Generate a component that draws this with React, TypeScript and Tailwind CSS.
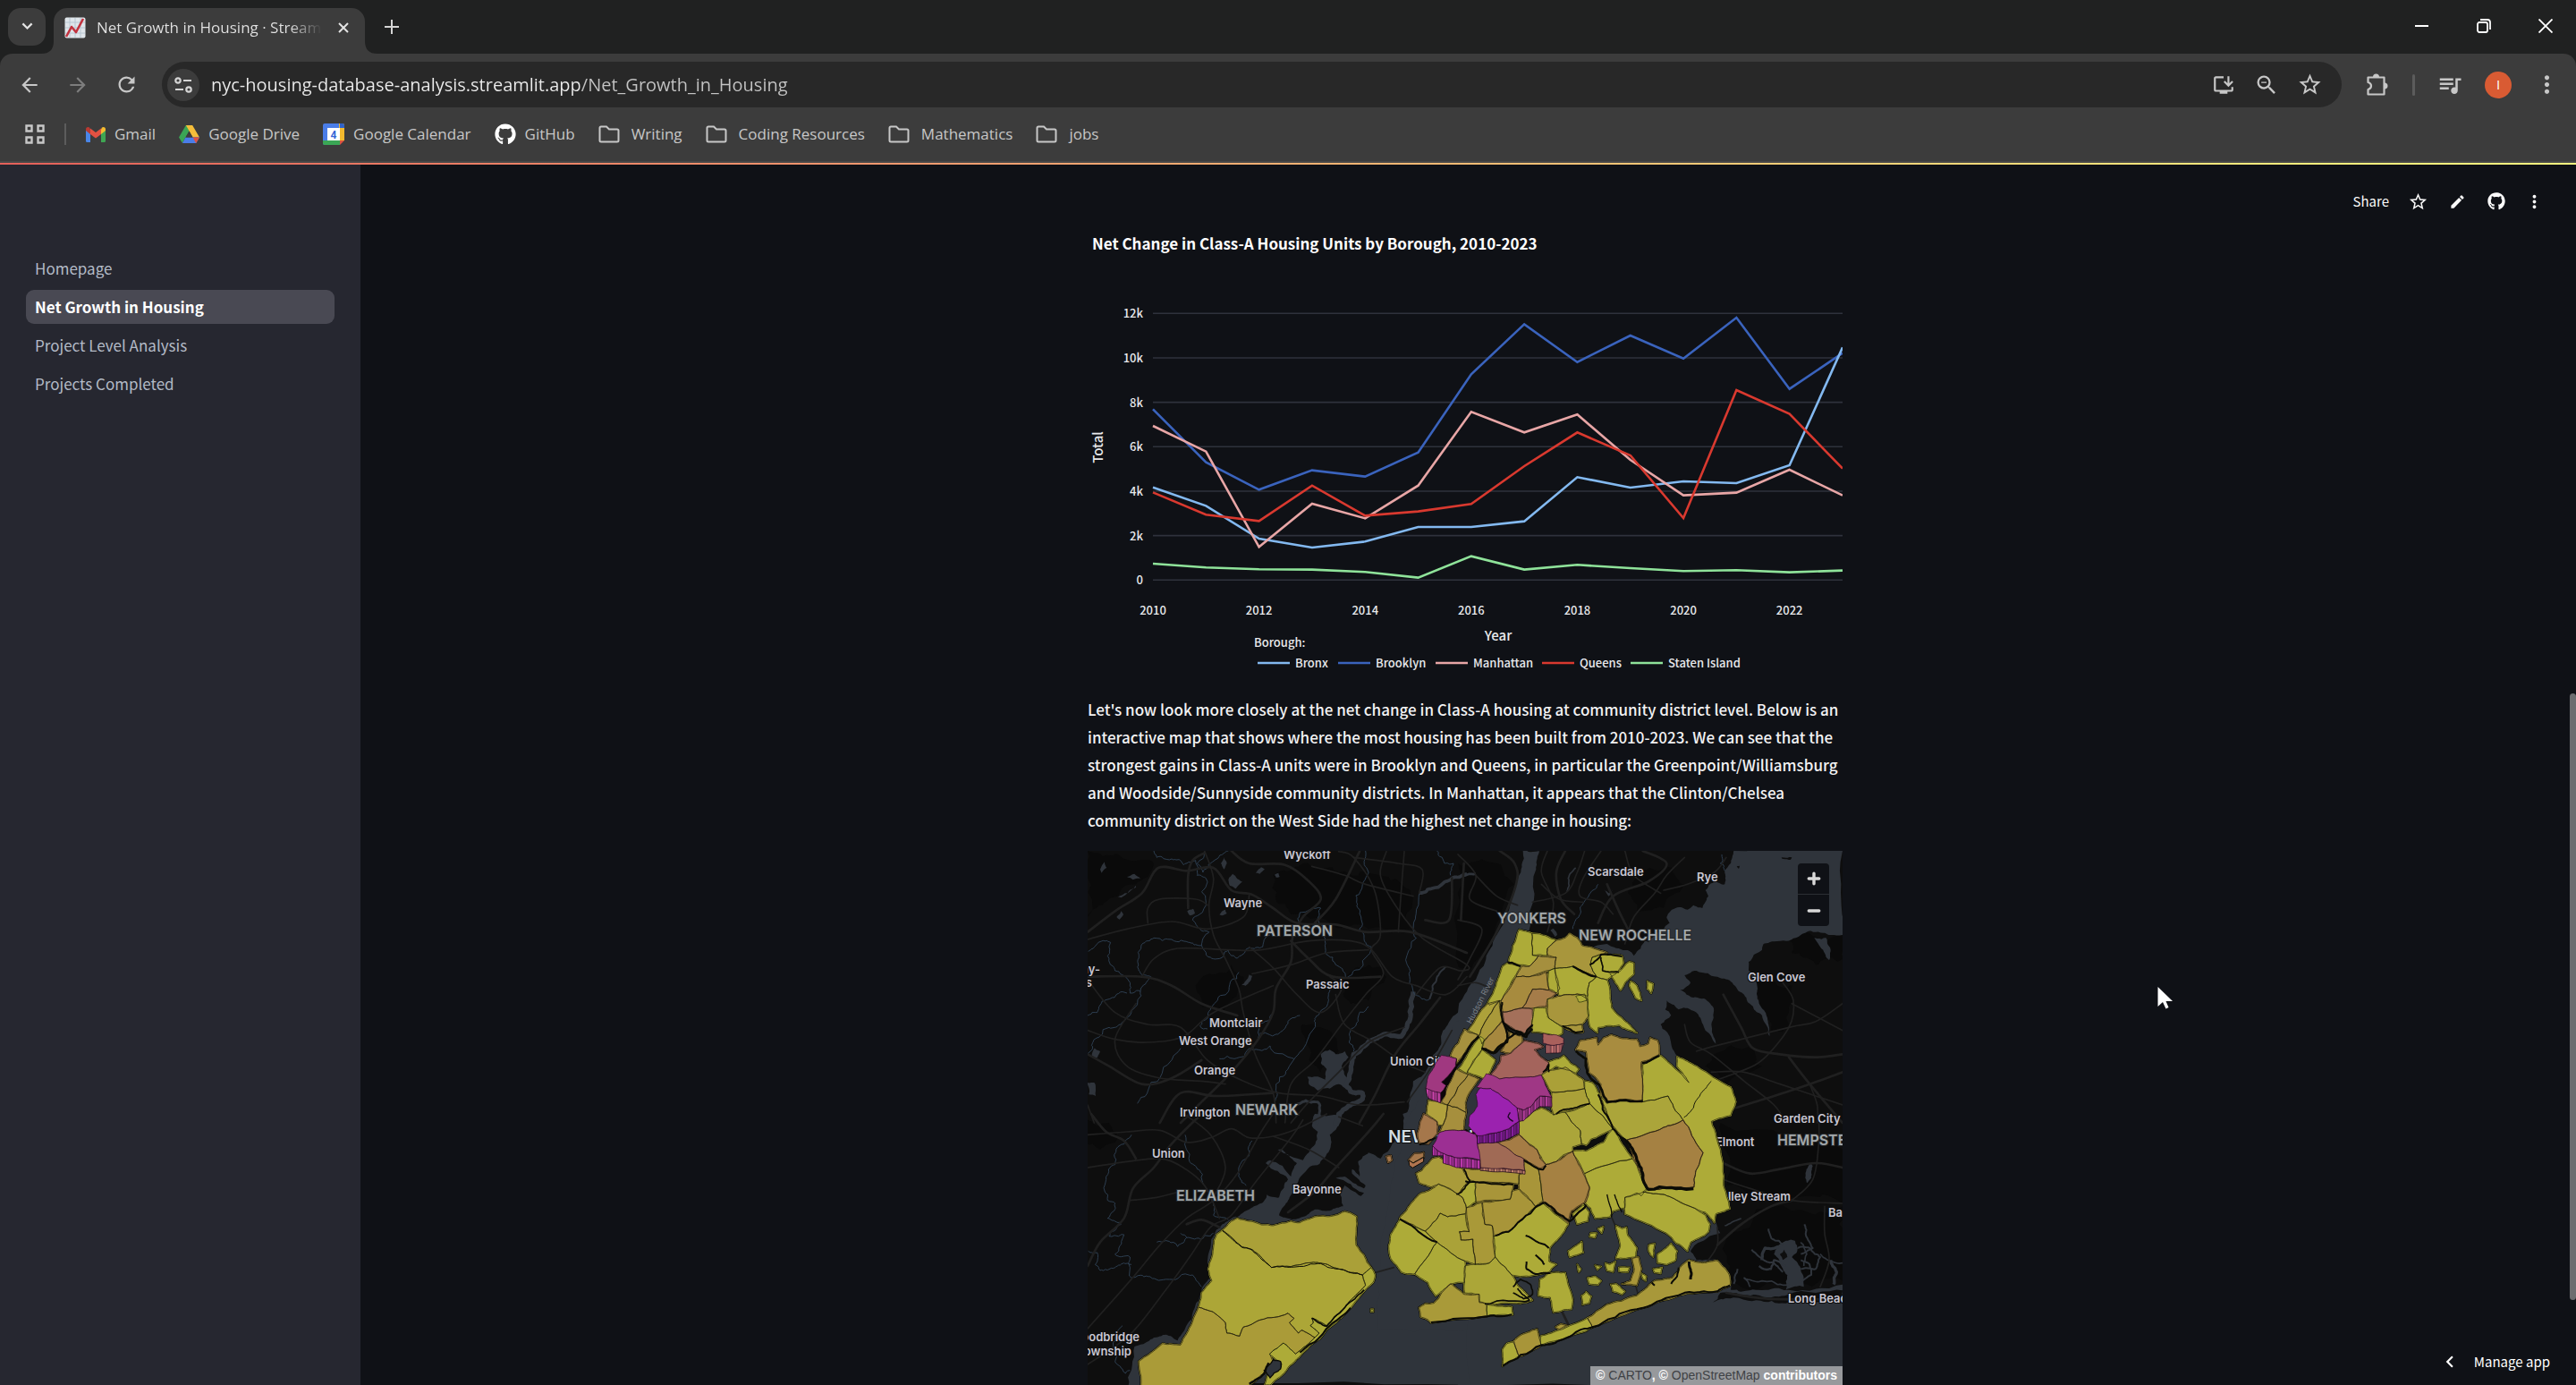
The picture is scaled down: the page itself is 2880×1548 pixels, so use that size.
import type { ReactNode } from 'react'
import {
  MdArrowBack,
  MdArrowForward,
  MdChevronLeft,
  MdEdit,
  MdMoreVert,
  MdOutlineInstallDesktop,
  MdQueueMusic,
  MdRefresh,
  MdStarBorder,
  MdZoomOut,
} from 'react-icons/md'
import { FaGithub } from 'react-icons/fa'

/* ---------- Browser chrome ---------- */

function ChartFavicon() {
  return (
    <svg viewBox="0 0 24 24" className="size-6 shrink-0" aria-hidden="true">
      <rect x="0.5" y="0.5" width="23" height="23" rx="2" fill="#dfe5ea" />
      <path d="M6 1v22M12 1v22M18 1v22M1 6h22M1 12h22M1 18h22" stroke="#b7c6d2" strokeWidth="1" />
      <path d="M2 22 8 11l5 6L21 2" fill="none" stroke="#c2333f" strokeWidth="2.6" strokeLinejoin="round" />
    </svg>
  )
}

function GmailIcon() {
  return (
    <svg viewBox="0 0 22 17" className="w-[22px] shrink-0" aria-hidden="true">
      <path d="M0 3v12.500q0 1.500 1.500 1.500H5V7z" fill="#4a86e8" />
      <path d="M22 3v12.500q0 1.500-1.500 1.500H17V7z" fill="#3fa653" />
      <path d="M17 2.500V8l5-4V2.500Q22 0 19.500 0q-.8 0-1.500.5z" fill="#f4bb30" />
      <path d="M5 2.500V8L0 4V2.500Q0 0 2.500 0 3.300 0 4 .5z" fill="#b93a32" />
      <path d="M5 8V1.500l6 4.500 6-4.500V8l-6 4.600z" fill="#e25142" />
    </svg>
  )
}

function DriveIcon() {
  return (
    <svg viewBox="0 0 24 21" className="w-[23px] shrink-0" aria-hidden="true">
      <path d="M8.200 0h7.600L12 6.700 4 20.500 0 14z" fill="#3aa655" />
      <path d="M8.200 0h7.600L24 14h-7.800z" fill="#f4bd3a" />
      <path d="M7.800 14H24l-4 7H4z" fill="#4a7de8" />
      <path d="M16.200 14H24l-4 7z" fill="#de5142" />
      <path d="M12 6.700 16.200 14H7.800z" fill="#3c3c3c" />
    </svg>
  )
}

function CalendarIcon() {
  return (
    <svg viewBox="0 0 24 24" className="size-6 shrink-0" aria-hidden="true">
      <path d="M2 0h16v5H5v19H2q-2 0-2-2V2q0-2 2-2z" fill="#4a7de8" />
      <path d="M18 0h4q2 0 2 2v17h-5V5h-1z" fill="#f2b92e" />
      <path d="M19 0h3q2 0 2 2v3h-5z" fill="#2f62c9" />
      <path d="M0 19h19v5H2q-2 0-2-2z" fill="#3aa655" />
      <path d="M19 19h5l-5 5z" fill="#de5142" />
      <rect x="5" y="5" width="14" height="14" fill="#fff" />
      <text x="12" y="16.500" textAnchor="middle" fontSize="12" fontWeight="700" fill="#3367d6" fontFamily="Roboto, sans-serif">
        4
      </text>
    </svg>
  )
}

function FolderIcon() {
  return (
    <svg viewBox="0 0 24 20" className="mr-[3px] w-6 shrink-0" fill="none" stroke="currentColor" strokeWidth="2" aria-hidden="true">
      <path d="M1.500 3q0-1.500 1.500-1.500h6l3 3h9q1.500 0 1.500 1.500v11q0 1.500-1.500 1.500H3Q1.500 18.500 1.500 17z" />
    </svg>
  )
}

function PuzzleIcon() {
  return (
    <svg viewBox="0 0 26 26" className="size-[26px]" aria-hidden="true">
      <path
        d="M2.500 4.500h18v19h-18v-5.500q3.500-1 3.500-4t-3.500-4z"
        fill="none"
        stroke="currentColor"
        strokeWidth="2.200"
        strokeLinejoin="round"
      />
      <path d="M8 4a3.500 3.500 0 0 1 7 0zM21 10.500a3.500 3.500 0 0 1 0 7z" fill="currentColor" />
    </svg>
  )
}

function IconButton({ label, children, className = '' }: { label: string; children: ReactNode; className?: string }) {
  return (
    <button type="button" aria-label={label} className={'flex size-12 shrink-0 items-center justify-center ' + className}>
      {children}
    </button>
  )
}

function TabStrip() {
  return (
    <div className="flex h-[60px] bg-[#202121]">
      <button
        type="button"
        aria-label="Search tabs"
        className="mt-[9px] ml-[9px] flex size-[42px] items-center justify-center rounded-[14px] bg-[#3c3c3c]"
      >
        <svg viewBox="0 0 14 10" className="w-[13px]" fill="none" stroke="#e3e3e3" strokeWidth="2.400" aria-hidden="true">
          <path d="m1.500 1.500 5.500 5.500 5.500-5.500" />
        </svg>
      </button>
      <div className="relative mt-[9px] ml-[9px] flex w-[348px] items-center rounded-t-[15px] bg-[#3c3c3c] pb-[7px] pl-3">
        <svg viewBox="0 0 14 14" className="absolute bottom-0 -left-[14px] size-[14px]" fill="#3c3c3c" aria-hidden="true">
          <path d="M14 0v14H0Q14 14 14 0z" />
        </svg>
        <svg viewBox="0 0 14 14" className="absolute -right-[14px] bottom-0 size-[14px]" fill="#3c3c3c" aria-hidden="true">
          <path d="M0 0v14h14Q0 14 0 0z" />
        </svg>
        <ChartFavicon />
        <span className="ml-3 w-[250px] overflow-hidden bg-[linear-gradient(90deg,#e3e3e3_215px,#3c3c3c_252px)] bg-clip-text text-[17px] leading-6 whitespace-nowrap text-transparent">
          Net Growth in Housing · Streamlit
        </span>
        <button type="button" aria-label="Close tab" className="ml-[14px] flex size-6 items-center justify-center">
          <svg viewBox="0 0 12 12" className="size-3" stroke="#e3e3e3" strokeWidth="2" aria-hidden="true">
            <path d="m1 1 10 10M11 1 1 11" />
          </svg>
        </button>
      </div>
      <button type="button" aria-label="New tab" className="ml-[18px] flex h-[60px] w-6 items-center justify-center">
        <svg viewBox="0 0 16 16" className="size-4" stroke="#d5d5d5" strokeWidth="2" aria-hidden="true">
          <path d="M8 0v16M0 8h16" />
        </svg>
      </button>
      <div className="ml-auto flex text-white">
        <button type="button" aria-label="Minimize" className="flex h-[58px] w-[69px] items-center justify-center">
          <span className="h-[2px] w-[15px] bg-white" />
        </button>
        <button type="button" aria-label="Restore" className="flex h-[58px] w-[69px] items-center justify-center">
          <svg viewBox="0 0 16 16" className="size-4" fill="none" stroke="currentColor" strokeWidth="1.800" aria-hidden="true">
            <rect x="1" y="4" width="11" height="11" rx="2" />
            <path d="M4 1h8q3 0 3 3v8" />
          </svg>
        </button>
        <button type="button" aria-label="Close" className="flex h-[58px] w-[69px] items-center justify-center">
          <svg viewBox="0 0 16 16" className="size-4" stroke="currentColor" strokeWidth="1.800" aria-hidden="true">
            <path d="m.5.5 15 15M15.500.5l-15 15" />
          </svg>
        </button>
      </div>
    </div>
  )
}

function AddressBar() {
  return (
    <div className="flex h-[69px] items-center rounded-t-[14px] bg-[#3c3c3c] px-[9px] text-[#c7c7c7]">
      <div className="flex gap-[6px]">
        <IconButton label="Back">
          <MdArrowBack size={26} />
        </IconButton>
        <IconButton label="Forward" className="text-[#7d7d7d]">
          <MdArrowForward size={26} />
        </IconButton>
        <IconButton label="Reload">
          <MdRefresh size={27} />
        </IconButton>
      </div>
      <div className="ml-4 flex h-[51px] flex-1 items-center rounded-full bg-[#282828] pr-3 pl-[6px]">
        <button
          type="button"
          aria-label="Site information"
          className="flex size-9 items-center justify-center rounded-full bg-[#3c3c3c]"
        >
          <svg viewBox="0 0 20 18" className="w-5" fill="none" stroke="#d5d5d5" strokeWidth="2.200" aria-hidden="true">
            <circle cx="4" cy="4" r="2.700" />
            <path d="M10 4h9M1 14h9" />
            <circle cx="16" cy="14" r="2.700" />
          </svg>
        </button>
        <input
          type="text"
          aria-label="Address and search bar"
          defaultValue="nyc-housing-database-analysis.streamlit.app/Net_Growth_in_Housing"
          className="ml-[13px] min-w-0 flex-1 bg-[linear-gradient(90deg,#ececec_412px,#c4c4c4_412px)] bg-clip-text text-[20px] text-transparent outline-none"
        />
        <IconButton label="Install app">
          <MdOutlineInstallDesktop size={26} />
        </IconButton>
        <IconButton label="Zoom">
          <MdZoomOut size={28} />
        </IconButton>
        <IconButton label="Bookmark this page">
          <MdStarBorder size={29} />
        </IconButton>
      </div>
      <div className="ml-4 flex items-center gap-[6px]">
        <IconButton label="Extensions">
          <PuzzleIcon />
        </IconButton>
        <span className="mx-[9px] h-6 w-[3px] rounded bg-[#5c5c5c]" />
        <IconButton label="Media controls">
          <MdQueueMusic size={30} />
        </IconButton>
        <IconButton label="Profile">
          <span className="flex size-[30px] items-center justify-center rounded-full bg-[#d95b33] text-[15px] text-white">I</span>
        </IconButton>
        <IconButton label="Menu">
          <MdMoreVert size={31} />
        </IconButton>
      </div>
    </div>
  )
}

const bookmarks: { name: string; icon: ReactNode }[] = [
  { name: 'Gmail', icon: <GmailIcon /> },
  { name: 'Google Drive', icon: <DriveIcon /> },
  { name: 'Google Calendar', icon: <CalendarIcon /> },
  { name: 'GitHub', icon: <FaGithub size={24} color="#fff" /> },
  { name: 'Writing', icon: <FolderIcon /> },
  { name: 'Coding Resources', icon: <FolderIcon /> },
  { name: 'Mathematics', icon: <FolderIcon /> },
  { name: 'jobs', icon: <FolderIcon /> },
]

function BookmarksBar() {
  return (
    <div className="flex h-[53px] items-center border-b-2 border-[#474747] bg-[#3c3c3c] pb-[9px] pl-7 text-[#c7c7c7]">
      <button type="button" aria-label="All apps">
        <svg viewBox="0 0 22 22" className="size-[22px]" fill="none" stroke="currentColor" strokeWidth="2.400" aria-hidden="true">
          <path d="M1.500 1.500h6v6h-6zM14.500 1.500h6v6h-6zM1.500 14.500h6v6h-6zM14.500 14.500h6v6h-6z" />
        </svg>
      </button>
      <span className="mx-[22px] h-6 w-[2px] bg-[#5c5c5c]" />
      <nav aria-label="Bookmarks" className="flex gap-[26px]">
        {bookmarks.map((b) => (
          <a key={b.name} href="#" className="flex items-center gap-[10px] text-[17px] leading-6 whitespace-nowrap">
            {b.icon}
            {b.name}
          </a>
        ))}
      </nav>
    </div>
  )
}

/* ---------- Line chart ---------- */

const series = [
  { name: 'Bronx', color: '#83b9f0', x: 190, data: [4170, 3340, 1865, 1463, 1731, 2389, 2389, 2644, 4630, 4160, 4442, 4362, 5167, 10468] },
  { name: 'Brooklyn', color: '#3a63bd', x: 280, data: [7690, 5301, 4066, 4939, 4657, 5744, 9260, 11514, 9810, 11004, 9971, 11810, 8602, 10213] },
  { name: 'Manhattan', color: '#e8a6a6', x: 389, data: [6938, 5784, 1490, 3436, 2778, 4254, 7569, 6643, 7448, 5408, 3811, 3932, 4966, 3811] },
  { name: 'Queens', color: '#d9392f', x: 508, data: [3945, 2939, 2657, 4254, 2899, 3087, 3422, 5126, 6643, 5610, 2791, 8549, 7475, 5019] },
  { name: 'Staten Island', color: '#8fe39a', x: 607, data: [738, 564, 483, 470, 362, 107, 1074, 470, 684, 537, 403, 443, 349, 429] },
]
const drawOrder = [1, 0, 2, 3, 4]
const px = (i: number) => 73 + (i * 771) / 13
const py = (v: number) => 364.3 - (v * 298) / 12000

function LineChart() {
  return (
    <svg
      viewBox="0 0 844 493"
      className="block w-full"
      role="img"
      aria-label="Net change in housing units by borough"
      fill="#e8e9ec"
      fontSize="13"
      fontWeight="500"
    >
      {[0, 2, 4, 6, 8, 10, 12].map((k) => (
        <g key={k}>
          <path d={`M73 ${py(k * 1000)}H844`} stroke="#2f323c" strokeWidth="1.600" />
          <text x="62" y={py(k * 1000) + 5} textAnchor="end">
            {k === 0 ? '0' : k + 'k'}
          </text>
        </g>
      ))}
      {[2010, 2012, 2014, 2016, 2018, 2020, 2022].map((year) => (
        <text key={year} x={px(year - 2010)} y="403" textAnchor="middle">
          {year}
        </text>
      ))}
      {drawOrder.map((n) => (
        <polyline
          key={n}
          fill="none"
          stroke={series[n].color}
          strokeWidth="2.600"
          points={series[n].data.map((v, i) => `${px(i)},${py(v)}`).join(' ')}
        />
      ))}
      <text x="459" y="432" textAnchor="middle" fontSize="15">
        Year
      </text>
      <text transform="translate(17 216) rotate(-90)" textAnchor="middle" fontSize="15">
        Total
      </text>
      <text x="186" y="439">
        Borough:
      </text>
      {series.map((s) => (
        <g key={s.name}>
          <path d={`M${s.x} 457h36`} stroke={s.color} strokeWidth="2.600" />
          <text x={s.x + 42} y="462">
            {s.name}
          </text>
        </g>
      ))}
    </svg>
  )
}

/* ---------- District map ---------- */

type Pt = [number, number]
const parse = (s: string): Pt[] => s.split(' ').map((p) => p.split(',').map(Number) as Pt)

const noise = (x: number, y: number) => {
  const n = Math.sin(x * 12.9898 + y * 78.233) * 43758.5453
  return n - Math.floor(n) - 0.5
}

// Subdivides every edge and shifts the midpoints, so that shared borders stay identical.
function rough(s: string, amp: number, closed: boolean): string {
  let pts = parse(s)
  if (closed) pts = [...pts, pts[0]]
  for (let pass = 0; pass < 3; pass++) {
    const out: Pt[] = [pts[0]]
    for (let i = 1; i < pts.length; i++) {
      const [ax, ay] = pts[i - 1]
      const [bx, by] = pts[i]
      const len = Math.hypot(bx - ax, by - ay)
      if (len > 9) {
        const mx = (ax + bx) / 2
        const my = (ay + by) / 2
        const k = Math.min(len * 0.3, 22) * amp
        out.push([mx + noise(mx, my) * k, my + noise(my, mx) * k])
      }
      out.push([bx, by])
    }
    pts = out
  }
  return 'M' + pts.map((p) => p[0].toFixed(1) + ' ' + p[1].toFixed(1)).join('L') + (closed ? 'Z' : '')
}

// Catmull-Rom spline through the given points.
function curve(s: string): string {
  const p = parse(s)
  let d = `M${p[0]}`
  for (let i = 0; i < p.length - 1; i++) {
    const a = p[i - 1] ?? p[i]
    const b = p[i]
    const c = p[i + 1]
    const e = p[i + 2] ?? c
    d += `C${b[0] + (c[0] - a[0]) / 6} ${b[1] + (c[1] - a[1]) / 6} ${c[0] - (e[0] - b[0]) / 6} ${c[1] - (e[1] - b[1]) / 6} ${c[0]} ${c[1]}`
  }
  return d
}

const WATER = '#2f343b'
const Y = '#adab38'
const O = '#aaa038'
const G = '#a89539'
const T = '#a6883f'
const B = '#a58142'

// The drawing is split in tiles; a tile unit is a third of a map pixel.
const tile = {
  nw: 'translate(-6 -6) scale(.33333)',
  ne: 'translate(414 -6) scale(.33333)',
  sw: 'translate(-6 294) scale(.33333)',
  se: 'translate(414 294) scale(.33333)',
  mid: 'translate(324 169) scale(.33333)',
}
type Tile = keyof typeof tile

const dark: [Tile, string][] = [
  ['nw', '640,100 740,60 860,90 1000,100 1100,150 1100,280 960,280 830,260 700,230 650,180'],
  ['nw', '880,450 960,400 1020,440 960,520 900,530'],
  ['nw', '18,18 120,30 240,60 180,130 90,180 18,240'],
  ['nw', '380,470 500,400 540,440 480,560 400,540'],
  ['nw', '740,600 830,620 860,690 800,760 760,720'],
  ['ne', '0,60 130,60 190,130 120,320 40,420 0,400'],
  ['ne', '590,90 700,70 760,130 690,210 600,220 570,160'],
  ['ne', '1000,440 1120,470 1110,600 1050,620 1010,560'],
  ['ne', '1120,300 1290,300 1290,380 1200,400 1120,360'],
  ['ne', '860,700 980,680 1020,740 900,800 830,740'],
  ['se', '880,30 1290,120 1290,300 1120,280 900,240'],
  ['se', '1000,320 1290,310 1290,560 1100,580 920,560 900,420'],
  ['sw', '18,18 90,30 120,80 60,120 18,100'],
]

const water: [Tile, string][] = [
  ['ne', '218,18 205,100 175,200 130,300 95,370 60,450 0,560 -50,620 -50,760 40,640 105,535 170,390 235,300 262,80 272,18'],
  ['nw', '1290,550 1230,640 1190,690 1150,760 1110,790 1100,850 1080,930 1300,930 1320,600'],
  [
    'ne',
    '925,18 915,60 895,85 895,130 860,120 830,150 840,170 820,210 790,200 770,215 730,210 700,240 710,260 690,280 660,300 620,330 590,370 500,330 300,400 200,600 0,700 0,930 600,930 790,760 730,700 710,640 680,600 715,570 695,550 700,520 740,550 770,545 800,560 830,620 865,665 850,600 855,540 830,515 790,510 745,485 780,460 760,435 800,420 870,440 920,460 960,500 990,540 1020,570 1045,640 1040,590 1010,530 1005,480 1000,430 975,420 975,390 1020,350 1025,330 1080,320 1150,300 1200,290 1250,300 1290,300 1290,18',
  ],
  [
    'se',
    '0,300 310,400 440,300 860,300 880,400 860,405 780,460 800,490 870,490 910,540 915,590 1000,590 1110,590 1290,572 1290,909 0,909',
  ],
  [
    'sw',
    '155,909 175,780 240,750 280,740 320,760 345,720 380,640 400,590 430,550 420,500 440,410 470,370 520,345 560,320 600,300 620,270 660,280 690,220 615,165 630,155 700,210 720,165 655,120 670,118 740,155 760,130 790,60 770,40 780,0 870,0 860,40 830,70 830,120 810,150 760,180 720,240 690,290 660,340 690,350 740,345 780,320 830,325 875,310 865,270 880,240 935,275 945,265 850,215 880,210 945,250 950,240 905,200 905,185 930,210 925,160 960,130 1000,150 1040,100 1080,60 1075,0 1300,0 1300,909',
  ],
  ['mid', '0,940 60,560 90,420 160,280 300,240 420,60 560,60 700,140 900,200 500,400 300,700 300,1100 0,1100'],
  ['nw', '800,700 830,685 850,700 880,690 893,710 870,740 890,780 890,820 860,800 830,815 790,822 760,800 755,775 790,775 815,785 820,750 800,730'],
  ['nw', '490,115 505,95 520,112 537,122 515,145 495,135'],
  ['nw', '60,80 75,55 82,75 65,92'],
  ['nw', '150,105 175,95 195,110 170,115'],
  ['nw', '465,60 475,38 485,60 475,80'],
  ['nw', '582,92 600,73 612,80 595,95'],
  ['nw', '645,98 658,92 662,105 650,107'],
  ['nw', '535,468 560,433 570,437 548,470'],
  ['nw', '32,700 40,680 60,690 50,712 35,712'],
  ['nw', '18,795 40,795 45,840 22,835'],
  ['nw', '115,240 130,220 138,232 125,248'],
  ['nw', '352,220 372,212 378,228 362,235'],
  ['nw', '120,172 180,135 180,140 130,175'],
  ['nw', '460,232 480,215 485,228 468,235'],
  ['ne', '310,285 320,278 333,300 325,306'],
  ['ne', '488,148 505,160 518,148 505,170'],
  ['ne', '1195,310 1235,310 1250,350 1245,385 1225,350'],
  ['se', '1165,215 1182,165 1190,175 1185,215 1170,232'],
  ['se', '1075,440 1100,425 1130,425 1140,450 1120,480 1150,520 1160,580 1100,590 1105,540 1080,500 1060,470'],
]

const landOver: [Tile, string][] = [
  ['se', '855,632 880,600 920,600 1000,607 1110,605 1290,592 1290,635 1100,635 1000,625 900,618'],
  ['se', '1080,470 1095,455 1105,480 1090,490'],
  ['ne', '620,310 650,300 640,325'],
  ['ne', '1085,40 1120,40 1115,48 1088,45'],
  ['ne', '935,70 945,68 942,78'],
]

const wideRivers: [Tile, string, number][] = [
  ['nw', '1110,490 1105,540 1090,600 1070,640 1000,640 950,670 910,700 900,760 885,800 900,825 940,830 940,850 900,870 860,900 850,940', 16],
  ['nw', '720,868 750,855 790,860 797,890 785,935', 9],
  ['nw', '1130,160 1170,145 1240,110 1290,95', 11],
  ['nw', '1165,515 1175,470 1195,435 1220,407', 6],
  ['ne', '0,105 30,98 60,95', 8],
  ['ne', '365,155 370,110 395,75', 5],
  ['se', '985,455 1020,485 1060,500 1090,530', 6],
  ['se', '1042,385 1055,420 1090,440', 6],
  ['se', '1162,370 1168,410 1190,450 1150,470', 6],
  ['se', '1020,490 1030,450 1075,445', 10],
  ['se', '1010,510 1050,520 1060,490 1100,510', 7],
  ['se', '1140,450 1180,450 1215,480 1200,520 1150,520', 6],
  ['se', '1150,490 1175,500 1185,540 1150,560', 6],
  ['se', '1150,430 1170,470 1160,510', 5],
  ['se', '895,375 950,350', 5],
  ['se', '980,580 960,550 1020,560 1110,570', 5],
  ['se', '1215,470 1240,490 1290,500', 5],
  ['se', '1250,490 1270,530 1260,572', 10],
  ['se', '925,570 930,540 938,520', 6],
]

const rivers: [Tile, string][] = [
  ['nw', '240,18 250,40 300,45 340,65 380,50 385,100 415,110 415,190 370,250 395,280 425,290 400,335 360,325 300,315 240,310 215,320 190,370 190,420 230,440 195,490 160,495 145,440 110,420 85,370 95,325 50,330 20,355'],
  ['nw', '410,18 385,60 405,90 430,60 470,30 490,18'],
  ['nw', '400,335 430,375 470,375 490,350 520,378 570,345 605,340 630,300'],
  ['nw', '195,490 160,570 130,600 90,610 40,650 18,700'],
  ['nw', '18,570 50,560 100,510 150,495'],
  ['nw', '525,425 490,490 430,550 395,605 420,615'],
  ['nw', '330,680 260,780 185,865'],
  ['nw', '460,715 510,715 560,680 630,672 710,715'],
  ['nw', '950,18 960,90 940,130 920,190 935,240 945,300 970,340 935,410 885,445'],
  ['nw', '810,300 815,360 850,400 885,445'],
  ['nw', '830,480 820,540 780,580 760,640 715,710 650,800 645,860'],
  ['nw', '590,645 595,600 635,565'],
  ['nw', '595,630 660,630 690,590 730,570'],
  ['nw', '960,540 920,595 900,620 895,660 910,690'],
  ['nw', '725,260 730,225 800,210 790,250 810,300'],
  ['nw', '1190,18 1215,60 1245,60 1235,100'],
  ['nw', '1130,160 1110,280 1120,310 1090,400 1110,490 1140,515 1165,515'],
  ['sw', '165,70 120,110 110,170 80,220 85,290 110,300 85,350 130,370 90,410 140,405 110,470 160,480 165,550 220,545 300,555 370,540 400,580'],
  ['sw', '345,70 360,160 395,190 410,240 440,300 440,340 490,355'],
  ['sw', '570,90 560,130 525,180 530,220 550,240'],
  ['sw', '250,430 320,445 350,415 330,400'],
  ['sw', '350,415 400,420 440,400'],
  ['sw', '135,710 110,830 145,870 160,860'],
  ['sw', '20,460 50,465 60,525 110,515 140,500 165,505'],
  ['ne', '470,130 430,180 410,230 385,280'],
  ['ne', '885,30 880,60 895,85'],
]

const roads: [Tile, string][] = [
  ['nw', '18,290 110,220 200,160 255,75 350,85 440,75 500,150 570,165 640,210 720,260 850,265 950,290 1100,290 1290,360'],
  ['nw', '18,315 150,280 300,255 420,280 540,240 560,165'],
  ['nw', '410,18 440,110 425,200 440,300 480,380 525,480 540,560 580,700 640,830 650,930'],
  ['nw', '18,440 200,440 300,470 400,530 520,570'],
  ['nw', '18,450 110,560 220,600 330,610 420,720 540,790 660,830 800,840 930,870 1080,860'],
  ['nw', '220,260 220,210 260,180 380,180 420,200'],
  ['nw', '355,210 355,100 370,50 410,25'],
  ['nw', '200,440 240,380 320,345 490,350 600,350 760,320 900,320 970,350 1040,440 1120,470 1220,500 1290,440'],
  ['nw', '860,20 910,40 980,150 1000,300 970,350 1010,430 950,500 870,600 780,720 700,800 680,930'],
  ['nw', '500,18 560,60 680,65 760,120 800,180 740,240 705,310 700,390 650,480 640,560 590,650 500,760 400,860 330,930'],
  ['nw', '1020,20 1000,100 1050,200 1140,310 1290,400 1270,420 1200,410 1120,500'],
  ['nw', '1080,610 960,660 860,760 760,860 700,930'],
  ['nw', '1200,510 1130,600 1050,700 980,840 930,930'],
  ['nw', '18,620 110,650 220,660 340,640 440,560 640,470'],
  ['nw', '180,530 110,650 150,740 260,780 400,790 480,800'],
  ['nw', '18,700 90,740 200,800 300,780 400,720'],
  ['nw', '850,500 880,600 980,660 1080,730 1150,760'],
  ['nw', '560,340 640,410 720,500 800,560 870,480 830,440'],
  ['nw', '700,320 760,380 840,440 1000,440'],
  ['nw', '570,430 700,400 820,360 960,350'],
  ['nw', '770,70 880,100 950,130 1110,170'],
  ['nw', '930,20 850,180 780,260'],
  ['nw', '910,40 1060,60 1140,80 1130,160'],
  ['nw', '1080,20 1070,150 1060,290'],
  ['nw', '1240,110 1230,250 1150,250'],
  ['nw', '1090,860 1160,760 1240,620'],
  ['nw', '18,870 40,930'],
  ['nw', '260,930 330,830 450,840 640,830'],
  ['sw', '18,70 150,60 260,55 350,95 430,80 500,50 560,80 640,75 720,50 820,0'],
  ['sw', '18,180 150,160 260,150 330,175 410,240 460,350'],
  ['sw', '30,0 80,60 140,90 180,150'],
  ['sw', '18,720 160,560 260,440 350,350 440,290 520,200 600,60 640,0'],
  ['sw', '18,840 160,740 280,590 360,480 430,380 500,340 580,230 700,80 740,20'],
  ['sw', '18,510 60,430 140,350 170,250 240,180 300,100 400,0'],
  ['sw', '340,0 430,70 480,180 440,280'],
  ['sw', '640,75 760,120 860,180'],
  ['sw', '690,330 780,260 850,180 960,60 1010,0'],
  ['sw', '160,290 250,280 330,260'],
  ['sw', '980,533 1045,515'],
  ['sw', '350,370 400,355 460,380'],
  ['sw', '860,10 940,40'],
  ['ne', '300,18 280,90 320,190 300,290'],
  ['ne', '360,18 330,90 345,180 390,230'],
  ['ne', '425,18 400,90 360,160 250,190'],
  ['ne', '480,18 420,110 410,170 480,190 520,230'],
  ['ne', '620,18 700,60 640,120 520,170 470,260'],
  ['ne', '760,40 700,100 660,160 590,240 560,330'],
  ['ne', '900,40 860,90 770,130 690,150'],
  ['ne', '500,130 540,220 570,280'],
  ['ne', '280,130 340,180 420,190'],
  ['ne', '560,18 590,100 680,160'],
  ['ne', '140,18 190,60 195,130 130,290 40,440'],
  ['ne', '60,100 130,170 200,200'],
  ['ne', '0,250 80,280 40,380 0,450'],
  ['ne', '20,60 10,250'],
  ['ne', '0,30 60,100 40,180 130,220'],
  ['ne', '110,480 60,460 0,470'],
  ['ne', '890,500 950,610 990,680 1080,700 1200,710 1290,700'],
  ['ne', '1090,460 1125,520 1110,610 1020,720 940,760 830,800'],
  ['ne', '760,600 780,660 850,700 960,790 1060,870 1100,930'],
  ['ne', '930,880 1060,840 1180,800 1290,760'],
  ['ne', '1290,530 1200,590 1110,610 870,670 800,690'],
  ['ne', '1120,530 1290,620'],
  ['ne', '1110,710 1180,800 1290,930'],
  ['ne', '850,760 960,760 1080,800 1290,870'],
  ['ne', '1180,800 1205,870 1205,930'],
  ['se', '890,165 980,200 1080,185 1200,165 1290,180'],
  ['se', '1210,0 1210,100 1190,220 1120,290'],
  ['se', '890,220 980,250 1120,290 1290,300'],
  ['se', '870,440 950,370 1050,310 1120,290'],
  ['se', '1230,310 1230,400 1245,490 1215,580'],
  ['se', '840,490 870,440 870,380'],
  ['se', '900,600 1040,620 1290,622'],
  ['se', '515,345 530,380'],
  ['se', '595,570 605,610'],
  ['se', '350,665 372,710'],
]

const districts: [Tile, string, string][] = [
  // Staten Island
  ['sw', O, '470,390 495,365 520,350 560,360 600,372 640,375 700,360 730,365 780,345 850,340 880,328 920,345 918,440 945,475 968,515 940,540 860,520 800,500 750,500 700,512 635,515 600,480 570,455 535,445'],
  ['sw', '#aca637', '470,390 535,445 570,455 600,480 635,515 700,512 750,500 800,500 860,520 940,540 950,575 880,650 820,710 770,685 775,700 765,710 795,735 780,750 735,725 725,735 695,700 710,685 690,668 600,690 540,715 528,745 485,735 480,700 440,665 390,648 400,600 435,560 422,520 440,450 450,405'],
  ['sw', '#aa9b38', '390,648 440,665 480,700 485,735 528,745 540,715 600,690 690,668 710,685 695,700 725,735 735,725 780,750 715,805 675,768 628,805 640,830 610,870 560,909 560,930 200,930 190,830 210,815 270,770 330,775 355,730'],
  ['sw', Y, '968,515 982,540 975,565 900,650 850,700 740,800 690,850 630,909 612,909 620,880 670,840 628,805 675,768 715,805 780,750 795,735 765,710 775,700 770,685 820,710 880,650 950,575 940,540'],
  // Manhattan
  ['ne', Y, '165,395 210,405 190,440 145,520 105,535 100,530 130,460 150,405'],
  ['ne', '#ada13a', '100,530 140,520 120,545 70,640 35,620'],
  ['ne', '#a9993a', '140,520 148,590 90,650 80,665 70,640 120,545'],
  ['ne', T, '150,585 170,640 160,660 120,695 80,680 85,660'],
  ['mid', '#a6913e', '292,92 338,110 265,210 265,190 245,180'],
  ['mid', Y, '345,115 358,125 350,160 300,240 272,225'],
  ['mid', Y, '350,160 395,195 360,258 300,235'],
  ['mid', '#a58d3e', '262,225 305,242 270,285 235,345 215,335 230,300'],
  ['mid', '#a58d3e', '305,242 340,258 310,300 295,335 297,370 235,345 270,285'],
  ['mid', '#b0a13c', '170,330 235,345 220,412 200,412 200,400 165,375'],
  ['mid', '#a68f3d', '235,345 297,370 290,430 240,430 205,440 220,412'],
  ['mid', '#a5774b', '155,375 200,402 200,440 170,475 140,470 135,440 145,400'],
  ['mid', '#a5774b', '105,530 125,508 155,505 155,520 120,540'],
  ['mid', '#a5774b', '30,518 45,515 48,530 36,538'],
  // Bronx
  ['ne', Y, '205,283 248,295 250,368 270,370 240,405 210,400 170,390'],
  ['ne', Y, '248,295 330,318 300,345 300,368 250,368'],
  ['ne', '#a8963c', '330,318 360,310 375,295 400,310 415,335 470,350 500,360 450,375 443,400 465,440 385,405 325,412 330,375 300,368 300,345'],
  ['ne', Y, '325,412 385,405 465,440 440,460 435,505 400,498 340,505 335,480'],
  ['ne', '#a58f3e', '270,370 330,375 325,412 240,440 195,440 215,405 240,405'],
  ['ne', Y, '305,420 325,412 342,480 330,495 305,480'],
  ['ne', '#a78b3e', '195,440 240,440 295,425 305,485 250,482 215,545 150,558 145,520 170,485'],
  ['ne', '#a57c49', '250,482 305,485 330,495 300,515 295,540 255,545 215,545'],
  ['ne', '#a4705a', '215,545 250,550 248,600 225,630 195,620 155,595 150,558'],
  ['ne', T, '175,625 215,640 215,660 175,697 145,690 160,665'],
  ['ne', '#a8963c', '300,515 340,505 400,498 435,515 440,570 415,600 350,605 300,575'],
  ['ne', Y, '255,545 295,545 305,580 350,610 350,630 330,640 250,625 248,600'],
  ['ne', Y, '440,460 465,440 500,450 510,500 515,545 560,590 600,628 540,602 470,610 468,628 445,610 435,560 435,505'],
  ['ne', Y, '450,375 480,365 550,370 555,395 530,430 500,450 465,440 443,400'],
  ['ne', Y, '575,390 590,395 590,430 560,460 545,485 510,430 540,425'],
  ['ne', Y, '580,455 600,470 615,520 595,510 575,470'],
  ['ne', Y, '635,455 655,465 648,495 635,480'],
  ['ne', '#a8963c', '350,605 415,600 420,625 395,628'],
  ['ne', Y, '395,505 425,498 432,520 405,525'],
  // Queens
  ['mid', Y, '575,200 610,190 625,180 675,225 665,238 600,215 575,230'],
  ['mid', '#a4645c', '495,130 540,140 555,150 525,160 575,205 550,245 500,252 410,258 380,245 410,205 415,180 450,170 470,150'],
  ['mid', O, '550,245 575,230 630,218 690,260 695,290 585,302'],
  ['mid', O, '585,302 695,290 712,340 590,378 583,350'],
  ['mid', '#aba53a', '550,355 590,378 630,370 680,430 685,475 655,485 655,500 620,515 600,535 565,545 535,495 475,445 475,400 490,395 520,370'],
  ['mid', '#aba53a', '630,370 712,340 790,425 715,460 700,480 685,475 680,430'],
  ['mid', Y, '695,265 720,270 745,310 750,340 790,425 712,340 695,290'],
  ['mid', Y, '655,500 700,500 720,490 760,470 790,425 855,525 695,575 660,515'],
  ['mid', Y, '695,575 855,525 905,630 885,650 870,640 830,655 830,690 790,700 780,720 730,725 715,690 695,670 712,620'],
  ['se', '#aba53a', '480,-60 500,-35 540,-48 618,-40 705,-60 730,-10 755,20 690,45 565,88 520,40 500,0'],
  ['se', '#adab38', '620,-165 680,-195 775,-105 735,-160 735,-192 800,-160 915,-90 932,-40 915,5 850,25 880,120 890,240 912,318 865,335 860,365 830,330 735,290 690,270 620,262 635,250 792,245 798,190 822,130 755,20 730,-10 705,-60 618,-40'],
  ['ne', '#a88c3f', '515,635 540,645 600,650 610,675 640,665 645,645 670,655 675,700 615,725 620,800 618,860 540,852 500,860 480,835 480,800 440,760 430,690 395,685 410,655 440,650 465,645 470,670 490,645'],
  ['se', B, '565,88 690,45 755,20 822,130 798,190 792,245 635,250'],
  ['se', Y, '560,280 620,262 690,270 735,290 830,340 845,370 840,395 780,430 770,460 700,400 560,335'],
  // Brooklyn
  ['mid', B, '655,500 690,575 712,625 700,670 650,700 640,740 565,675 555,665 540,560 565,545 600,535'],
  ['mid', '#a57c45', '405,472 445,462 475,445 510,480 535,495 545,525 565,545 555,562 490,525'],
  ['mid', G, '290,558 345,560 495,572 475,580 475,610 330,605 300,590'],
  ['mid', G, '492,535 540,560 555,665 530,685 475,625 475,575 495,570'],
  ['mid', G, '330,605 455,610 445,660 330,670'],
  ['mid', Y, '310,600 328,605 330,670 298,690 285,655 270,645'],
  ['mid', '#a99b3a', '185,525 205,520 240,540 285,560 310,600 270,645 205,610 180,620 140,605 130,575 150,565'],
  ['mid', '#aa9f39', '205,610 285,655 298,690 295,710 235,720 210,708 160,768 75,725 110,680 150,640'],
  ['mid', Y, '75,728 160,768 200,805 125,912 80,905 45,860 38,820 45,780'],
  ['mid', '#aaa238', '210,708 235,720 295,710 308,770 275,770 280,798 320,795 328,880 293,868 200,805 160,768'],
  ['mid', '#acaa38', '200,805 293,868 292,940 245,945 195,985 170,940 125,912'],
  ['mid', '#a99938', '298,690 350,672 360,745 385,750 395,855 375,875 328,880 320,795 280,798 275,770 308,770'],
  ['mid', G, '352,672 445,662 450,635 475,628 530,685 500,715 440,770 390,785 385,750 360,745'],
  ['mid', '#aba638', '293,885 375,875 395,855 450,915 480,960 520,1000 480,1010 365,1012 342,1005 342,980 292,975 292,940'],
  ['mid', Y, '390,785 440,770 500,715 555,675 640,745 600,800 578,825 575,870 600,880 575,905 530,915 450,915 395,855'],
  ['mid', Y, '575,910 630,908 655,1000 650,1030 590,1040 580,990 540,985 545,930'],
  ['mid', Y, '655,710 690,680 710,705 705,735 670,745'],
  ['mid', '#a99a39', '140,1025 160,1012 190,1010 245,945 290,980 340,980 342,1008 365,1012 368,1052 180,1075 145,1055'],
  ['mid', Y, '368,1015 450,1022 453,1048 368,1052'],
  // The Rockaways and the islands of the bay
  ['se', Y, '150,845 150,790 165,770 185,765 205,812'],
  ['se', G, '188,762 215,740 265,722 278,775 205,812'],
  ['se', Y, '278,745 340,725 435,685 450,715 350,755 278,775'],
  ['se', '#a8983a', '435,685 500,640 600,610 660,560 720,550 750,510 775,490 820,500 870,492 910,540 912,575 870,595 740,608 600,655 450,715'],
  ['se', G, '328,715 345,705 365,710 340,722'],
  ['se', Y, '370,460 415,428 420,465 375,480'],
  ['se', Y, '530,375 550,385 565,380 570,410 600,450 595,480 530,485 545,440 535,400'],
  ['se', G, '585,485 605,480 615,520 600,575 550,570 580,560 592,520'],
  ['se', Y, '435,550 460,545 480,560 470,573 440,570'],
  ['se', Y, '415,610 430,597 447,612 440,635 418,640'],
  ['se', Y, '512,572 530,570 560,595 550,605 520,595'],
  ['se', Y, '670,470 700,450 715,435 735,460 730,490 700,505 670,500'],
  ['se', Y, '640,440 660,435 655,480 640,460'],
  ['se', Y, '655,520 685,515 680,535 660,532'],
  ['se', Y, '495,500 510,505 528,495 520,530 500,525'],
  ['se', Y, '445,400 465,400 460,415 442,412'],
  ['se', Y, '470,385 488,378 482,400'],
  ['se', Y, '460,508 480,512 468,522'],
  ['se', Y, '540,515 575,515 570,530 540,528'],
  ['se', Y, '400,505 412,520 405,530'],
  ['se', Y, '615,535 632,545 630,560 620,552'],
  ['sw', Y, '968,655 976,655 976,663 968,663'],
]

// Extruded districts: a top face and the wall below it.
const prisms: { top: string; side: string; fill: string; wall: string }[] = [
  { fill: '#a06a55', wall: '#cf8a72', top: '335,475 405,472 490,525 495,565 345,555', side: '345,555 495,565 495,577 345,565' },
  { fill: '#9c2f93', wall: '#c23ab3', top: '205,440 240,430 290,430 330,445 345,530 270,522 240,515 205,500 185,482', side: '185,482 205,500 240,515 270,522 345,530 345,560 265,555 220,540 220,515 185,515' },
  { fill: '#9f3785', wall: '#b8409f', top: '365,240 385,245 410,258 500,252 550,245 585,318 545,315 515,350 490,362 468,355 440,330 405,305 380,290 345,288 333,285', side: '585,318 545,315 515,350 490,362 468,355 475,400 490,398 520,370 545,350 585,352' },
  { fill: '#9b22af', wall: '#8b20a3', top: '345,288 380,290 405,305 440,330 468,355 472,385 475,400 440,425 400,438 335,448 305,415 310,380 335,350 330,310', side: '335,448 400,438 440,425 475,400 475,440 430,462 390,472 335,475' },
  { fill: '#a03880', wall: '#cf46ae', top: '215,178 265,190 262,215 215,268 230,280 212,304 162,288 175,240 195,205', side: '162,288 212,304 212,338 170,322' },
  { fill: '#a9605c', wall: '#d27b78', top: '555,105 600,110 625,122 625,138 590,145 555,138', side: '565,143 590,145 625,138 615,170 565,172' },
]

const shadows: [Tile, string, number][] = [
  ['mid', '835,465 870,530 890,590 908,628 1060,626', 10],
  ['mid', '340,115 265,215 228,280', 8],
  ['mid', '350,155 395,170 435,125 470,100 500,118 520,90', 7],
  ['mid', '418,0 420,65 440,95 480,110', 6],
  ['mid', '665,165 700,190 705,240 750,290 770,335 890,332', 8],
  ['mid', '888,205 945,180', 7],
  ['mid', '560,672 600,705 645,735 700,680', 7],
  ['mid', '395,782 440,770 530,688 560,672', 6],
  ['mid', '75,728 200,805', 6],
  ['mid', '497,783 575,825', 6],
  ['mid', '530,848 560,880', 6],
  ['mid', '500,870 500,895 530,912 580,908', 6],
  ['mid', '455,955 480,930 515,950 520,980 490,995 455,975', 5],
  ['mid', '470,960 510,1000 360,1012', 5],
  ['mid', '295,600 340,605 455,612', 6],
  ['mid', '490,530 555,562 565,548', 6],
  ['mid', '265,645 310,600 290,560', 5],
  ['mid', '180,1074 370,1054 450,1048', 6],
  ['mid', '770,645 785,720', 4],
  ['mid', '795,645 820,705', 4],
  ['mid', '740,310 755,360 790,425 835,465', 6],
  ['mid', '1045,870 1050,930', 9],
  ['mid', '1010,890 1005,920 985,945', 6],
  ['mid', '140,478 195,455', 6],
  ['mid', '555,235 575,208 575,235', 5],
  ['mid', '280,432 300,430 305,445 330,440', 7],
  ['mid', '600,375 712,341', 5],
  ['ne', '80,680 120,697 165,660 150,590', 7],
  ['ne', '155,597 195,622 225,635 250,600', 7],
  ['ne', '168,392 210,405', 7],
  ['ne', '385,405 463,440', 7],
  ['ne', '443,400 480,365 550,372', 6],
  ['ne', '480,375 485,420 540,425', 5],
  ['ne', '350,606 395,628 420,622', 6],
  ['se', '150,845 280,775 350,757 450,715 600,655 740,608 870,595 912,575', 6],
  ['se', '660,575 650,565', 6],
  ['sw', '770,685 820,712 880,650 945,590', 5],
  ['sw', '560,905 610,870 625,835', 7],
  ['sw', '470,392 535,447 570,457 635,515 700,514 800,502 860,520 940,540', 3],
  ['sw', '730,800 780,765 900,650', 6],
]

const minor = ['Wyckoff,219,9', 'Wayne,152,63', 'Passaic,244,154', 'Montclair,136,197', 'West Orange,102,217', 'Orange,119,250', 'Irvington,103,297', 'Union City,338,240', 'Scarsdale,559,28', 'Rye,681,34', 'Glen Cove,738,146', 'Garden City,767,304', 'Union,72,343', 'Bayonne,229,383', 'Elmont,702,330', 'Baldwin,828,409', 'Long Beach,783,505']
const minorEnd = ['Parsippany-,14,137', 'Troy Hills,5,152', 'Woodbridge,58,548', 'Township,49,564', 'Valley Stream,786,391']
const major = ['PATERSON,189,95', 'NEWARK,165,295', 'YONKERS,458,81', 'NEW ROCHELLE,549,100', 'ELIZABETH,99,391', 'HEMPSTEAD,771,329']

function Labels({ items, anchor }: { items: string[]; anchor: 'start' | 'end' }) {
  return (
    <>
      {items.map((item) => {
        const [name, x, y] = item.split(',')
        return (
          <text key={name} x={x} y={y} textAnchor={anchor}>
            {name}
          </text>
        )
      })}
    </>
  )
}

function DistrictMap() {
  return (
    <svg viewBox="0 0 844 597" className="block w-full" role="img" aria-label="Map of net housing change by community district">
      <defs>
        <pattern id="wall" width="19" height="60" patternUnits="userSpaceOnUse">
          <path d="M2 0v60M8 0v60M12 0v60" stroke="#160414" strokeWidth="2" />
        </pattern>
      </defs>
      <rect width="844" height="597" fill="#0e0e0e" />
      {dark.map(([t, s], i) => (
        <path key={i} transform={tile[t]} d={rough(s, 1.6, true)} fill="#0a0a0a" />
      ))}
      {water.map(([t, s], i) => (
        <path key={i} transform={tile[t]} d={rough(s, 0.8, true)} fill={WATER} />
      ))}
      {landOver.map(([t, s], i) => (
        <path key={i} transform={tile[t]} d={rough(s, 0.8, true)} fill="#0e0e0e" />
      ))}
      {wideRivers.map(([t, s, w], i) => (
        <path key={i} transform={tile[t]} d={rough(s, 0.8, false)} fill="none" stroke={WATER} strokeWidth={w} strokeLinejoin="round" />
      ))}
      {rivers.map(([t, s], i) => (
        <path key={i} transform={tile[t]} d={rough(s, 1.3, false)} fill="none" stroke="#32465a" strokeWidth="2.600" strokeLinejoin="round" />
      ))}
      {roads.map(([t, s], i) => (
        <path key={i} transform={tile[t]} d={curve(s)} fill="none" stroke="#202020" strokeWidth={i % 3 === 0 ? 8 : 5} strokeLinecap="round" />
      ))}
      <g fontFamily="Inter, sans-serif" fontSize="13" fontWeight="600" fill="#c9c7d3" stroke="#0e0e0e" strokeWidth="2" paintOrder="stroke">
        <Labels items={minor} anchor="start" />
        <Labels items={minorEnd} anchor="end" />
        <g fontSize="16" fill="#a3a8aa" stroke="#26292c">
          <Labels items={major} anchor="start" />
        </g>
        <text x="336" y="326" fontSize="19" fill="#d3dde4">
          NEW YORK
        </text>
        <text transform="translate(429 194) rotate(-63)" fontSize="9" fontWeight="400" fill="#7b8087" stroke="none">
          Hudson River
        </text>
      </g>
      {districts.map(([t, , s], i) => (
        <path key={i} transform={tile[t]} d={rough(s, 0.4, true)} fill="none" stroke="#0b0b06" strokeWidth="9" strokeLinejoin="round" />
      ))}
      {districts.map(([t, fill, s], i) => (
        <path key={i} transform={tile[t]} d={rough(s, 0.4, true)} fill={fill} stroke={fill} strokeWidth="5" strokeLinejoin="round" />
      ))}
      {districts.map(([t, , s], i) => (
        <path key={i} transform={tile[t]} d={rough(s, 0.4, true)} fill="none" stroke="#191a0a" strokeWidth="2" strokeLinejoin="round" />
      ))}
      <path transform={tile.sw} d={rough('640,825 665,830 665,855 630,885 610,860', 0.6, true)} fill={WATER} stroke="#0b0b06" strokeWidth="4" />
      <path transform={tile.se} d={rough('850,-110 825,-80 790,-20 758,12', 0.5, false)} fill="none" stroke="#191a0a" strokeWidth="3" />
      {shadows.map(([t, s, w], i) => (
        <path key={i} transform={tile[t]} d={rough(s, 0.6, false)} fill="none" stroke="#0b0b06" strokeWidth={w} strokeLinejoin="bevel" />
      ))}
      <g transform={tile.mid} strokeLinejoin="round">
        <path d="M265 190 262 225 228 290V310L210 335 212 304 230 280 215 268z" fill="#0b0609" stroke="#0b0609" strokeWidth="3" />
        <path d="M105 530 120 540 155 520V535L118 556 107 548z" fill="#b0744f" stroke="#0b0b06" strokeWidth="3" />
        {prisms.map((p) => (
          <g key={p.top}>
            <path d={rough(p.side, 0.2, true)} fill={p.wall} stroke="#160414" strokeWidth="2" />
            <path d={rough(p.side, 0.2, true)} fill="url(#wall)" />
            <path d={rough(p.top, 0.4, true)} fill={p.fill} stroke="#2a0a22" strokeWidth="2" />
          </g>
        ))}
        <path d={rough('445,370 438,385 455,400', 0.8, false)} fill="none" stroke="#1d0522" strokeWidth="4" />
      </g>
    </svg>
  )
}

/* ---------- Page ---------- */

const pages = ['Homepage', 'Net Growth in Housing', 'Project Level Analysis', 'Projects Completed']

function Sidebar() {
  return (
    <aside className="w-[403px] shrink-0 bg-[#262730] px-[29px] pt-[97px]">
      <nav aria-label="Pages" className="flex flex-col gap-[5px]">
        {pages.map((page) => (
          <a
            key={page}
            href="#"
            aria-current={page === 'Net Growth in Housing' ? 'page' : undefined}
            className={
              'flex h-[38px] items-center rounded-[9px] px-[10px] text-[17px] ' +
              (page === 'Net Growth in Housing' ? 'bg-[#494953] font-bold text-white' : 'text-[#b3bac6]')
            }
          >
            {page}
          </a>
        ))}
      </nav>
    </aside>
  )
}

function AppToolbar() {
  return (
    <div className="flex h-[76px] items-center justify-end pt-[6px] pr-5 text-[#fafafa]">
      <button type="button" className="mr-[10px] text-[15px]">
        Share
      </button>
      <button type="button" aria-label="Favorite" className="flex h-10 w-11 items-center justify-center">
        <MdStarBorder size={23} />
      </button>
      <button type="button" aria-label="Edit" className="flex h-10 w-11 items-center justify-center">
        <MdEdit size={19} />
      </button>
      <button type="button" aria-label="View source" className="flex h-10 w-11 items-center justify-center">
        <FaGithub size={20} />
      </button>
      <button type="button" aria-label="More options" className="flex h-10 w-10 items-center justify-center">
        <MdMoreVert size={23} />
      </button>
    </div>
  )
}

export default function App() {
  return (
    <div className="relative flex h-screen flex-col overflow-hidden bg-[#202121] font-['Open_Sans',sans-serif]">
      <header>
        <TabStrip />
        <AddressBar />
        <BookmarksBar />
      </header>
      <div className="h-[2px] shrink-0 bg-[linear-gradient(90deg,#e4605a,#f09a70_35%,#fffd80)]" />
      <div className="relative flex min-h-0 flex-1 bg-[#0f1116] font-['Noto_Sans_CJK_SC',sans-serif]">
        <Sidebar />
        <main className="min-w-0 flex-1 overflow-hidden">
          <AppToolbar />
          <div className="mx-auto max-w-[844px]">
            <h2 className="pl-[5px] text-[17px] leading-6 font-bold text-white">
              Net Change in Class-A Housing Units by Borough, 2010-2023
            </h2>
            <LineChart />
            <p className="text-[17px] leading-[31px] font-medium text-[#f2f2f3]">
              Let's now look more closely at the net change in Class-A housing at community district level. Below is an
              interactive map that shows where the most housing has been built from 2010-2023. We can see that the
              strongest gains in Class-A units were in Brooklyn and Queens, in particular the Greenpoint/Williamsburg and
              Woodside/Sunnyside community districts. In Manhattan, it appears that the Clinton/Chelsea community
              district on the West Side had the highest net change in housing:
            </p>
            <div className="relative mt-[19px]">
              <DistrictMap />
              <div className="absolute top-[14px] right-[15px] flex w-[35px] flex-col divide-y divide-[#2b2e34] rounded bg-[#0f1116] text-[#d8d8d8]">
                <button type="button" aria-label="Zoom in" className="flex h-[35px] items-center justify-center">
                  <svg viewBox="0 0 14 14" className="size-4" stroke="currentColor" strokeWidth="3" strokeLinecap="round" aria-hidden="true">
                    <path d="M7 2v10M2 7h10" />
                  </svg>
                </button>
                <button type="button" aria-label="Zoom out" className="flex h-[35px] items-center justify-center">
                  <svg viewBox="0 0 14 14" className="size-4" stroke="currentColor" strokeWidth="3" strokeLinecap="round" aria-hidden="true">
                    <path d="M2 7h10" />
                  </svg>
                </button>
              </div>
              <div className="absolute right-0 bottom-0 flex h-[21px] items-center bg-[#97999c] px-[6px] font-['Liberation_Sans',sans-serif] text-[14px] whitespace-pre text-white">
                <b>© </b>
                <a href="#" className="text-[#3f4246]">CARTO</a>
                <b>, © </b>
                <a href="#" className="text-[#3f4246]">OpenStreetMap</a>
                <b> contributors</b>
              </div>
            </div>
          </div>
        </main>
        <div className="flex w-[7px] shrink-0 flex-col pt-[591px]">
          <div className="h-[678px] rounded-full bg-[#6c6d70]" />
        </div>
        <button type="button" className="absolute right-[29px] bottom-[13px] flex items-center gap-[14px] text-[15px] leading-6 text-white">
          <MdChevronLeft size={26} />
          Manage app
        </button>
      </div>
      <svg viewBox="0 0 17 26" className="absolute top-[1102px] left-[2412px] w-[17px]" aria-hidden="true">
        <path d="M.5 1v22l5.500-5 3.500 7.500 3-1.500L9.500 17H17z" fill="#fff" />
      </svg>
    </div>
  )
}
